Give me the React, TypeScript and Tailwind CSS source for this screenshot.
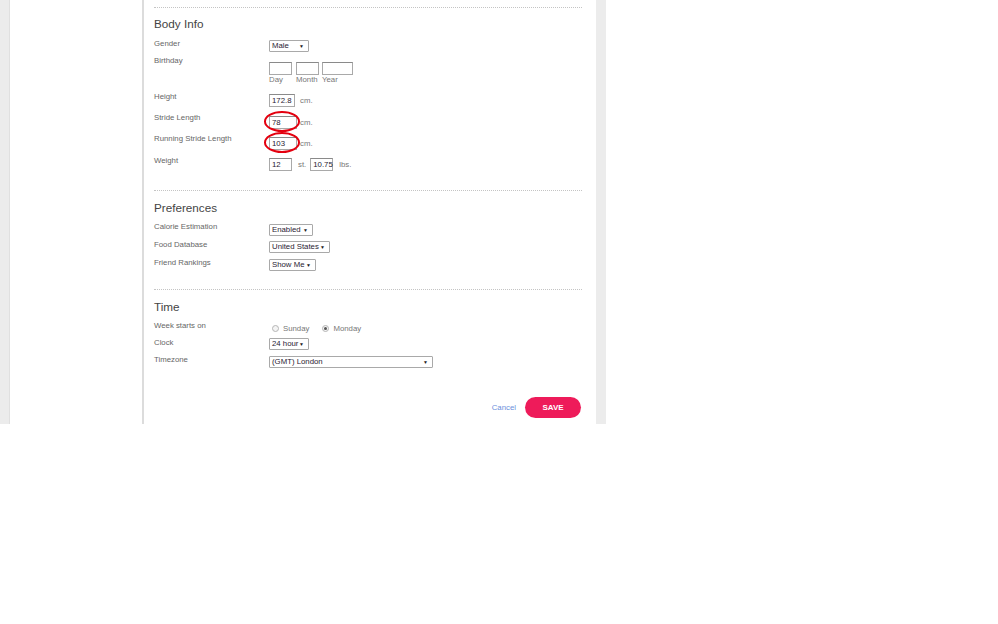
import React from "react";

const font = { fontFamily: '"Liberation Sans", Arial, sans-serif' };

function Select({ value, w }: { value: string; w: string }) {
  return (
    <div
      className={`${w} h-[12px] border border-[#a9a9a9] bg-white flex items-center justify-between pl-[2px] pr-[4px] text-[7.8px] leading-none text-[#2a2233] rounded-[1px]`}
    >
      <span>{value}</span>
      <span className="text-[5px] text-[#222]">▼</span>
    </div>
  );
}

function Input({ value = "", w }: { value?: string; w: string }) {
  return (
    <div
      className={`${w} h-[13px] border border-[#a9a9a9] border-t-[#8a8a8a] bg-white flex items-center pl-[2px] text-[7.8px] leading-none text-[#2a2233]`}
    >
      {value}
    </div>
  );
}

function Label({ children }: { children: React.ReactNode }) {
  return <div className="w-[115px] shrink-0 text-[7.8px] leading-[12px] text-[#666]">{children}</div>;
}

function Heading({ children, mt }: { children: React.ReactNode; mt: string }) {
  return <div className={`${mt} h-[14px] text-[11.7px] leading-[14px] text-[#444]`}>{children}</div>;
}

function Ring() {
  return (
    <div className="absolute left-[-5px] top-[-5px] w-[36px] h-[21px] rounded-[50%] border-2 border-[#e4000f] pointer-events-none" />
  );
}

function Radio({ checked }: { checked?: boolean }) {
  return (
    <span className="w-[7px] h-[7px] rounded-full border border-[#b5b5b5] bg-[#f4f4f4] flex items-center justify-center">
      {checked && <span className="w-[3px] h-[3px] rounded-full bg-[#555]" />}
    </span>
  );
}

const unit = "text-[7.8px] text-[#777]";

export default function App() {
  return (
    <div className="w-[998px] h-[624px] bg-white" style={font}>
      <div className="flex h-[424px] w-[606px]">
        <div className="w-[10px] bg-[#ececec] border-r border-[#e0e0e0]" />
        <div className="w-[132px] bg-white" />
        <div className="w-[2px] bg-[#dcdcdc]" />
        <div className="w-[452px] bg-white pl-[10px] pr-[14px] pt-[7px]">
          {/* Body Info */}
          <div className="border-t border-dotted border-[#c4c4c4]" />
          <Heading mt="mt-[9px]">Body Info</Heading>
          <div className="mt-[7px] h-[17px] flex items-start">
            <Label>Gender</Label>
            <div className="mt-[2px]">
              <Select value="Male" w="w-[40px]" />
            </div>
          </div>
          <div className="h-[36px] flex items-start">
            <Label>Birthday</Label>
            <div className="mt-[7px] flex gap-[4px]">
              <div>
                <Input w="w-[23px]" />
                <div className="text-[7.8px] leading-[10px] text-[#777]">Day</div>
              </div>
              <div>
                <Input w="w-[23px]" />
                <div className="text-[7.8px] leading-[10px] text-[#777]">Month</div>
              </div>
              <div className="-ml-[1px]">
                <Input w="w-[31px]" />
                <div className="text-[7.8px] leading-[10px] text-[#777]">Year</div>
              </div>
            </div>
          </div>
          <div className="h-[21px] flex items-start">
            <Label>Height</Label>
            <div className="mt-[3px] flex items-center gap-[5px]">
              <Input value="172.8" w="w-[26px]" />
              <span className={unit}>cm.</span>
            </div>
          </div>
          <div className="h-[21px] flex items-start">
            <Label>Stride Length</Label>
            <div className="mt-[4px] flex items-center gap-[3px]">
              <div className="relative">
                <Input value="78" w="w-[28px]" />
                <Ring />
              </div>
              <span className={unit}>cm.</span>
            </div>
          </div>
          <div className="h-[22px] flex items-start">
            <Label>Running Stride Length</Label>
            <div className="mt-[4px] flex items-center gap-[3px]">
              <div className="relative">
                <Input value="103" w="w-[28px]" />
                <Ring />
              </div>
              <span className={unit}>cm.</span>
            </div>
          </div>
          <div className="h-[35px] flex items-start">
            <Label>Weight</Label>
            <div className="mt-[3px] flex items-center">
              <Input value="12" w="w-[23px]" />
              <span className={`ml-[6px] mr-[4px] ${unit}`}>st.</span>
              <Input value="10.75" w="w-[23px]" />
              <span className={`ml-[6px] ${unit}`}>lbs.</span>
            </div>
          </div>

          {/* Preferences */}
          <div className="border-t border-dotted border-[#c4c4c4]" />
          <Heading mt="mt-[10px]">Preferences</Heading>
          <div className="mt-[6px] h-[18px] flex items-start">
            <Label>Calorie Estimation</Label>
            <div className="mt-[3px]">
              <Select value="Enabled" w="w-[44px]" />
            </div>
          </div>
          <div className="h-[18px] flex items-start">
            <Label>Food Database</Label>
            <div className="mt-[2px]">
              <Select value="United States" w="w-[61px]" />
            </div>
          </div>
          <div className="h-[32px] flex items-start">
            <Label>Friend Rankings</Label>
            <div className="mt-[2px]">
              <Select value="Show Me" w="w-[47px]" />
            </div>
          </div>

          {/* Time */}
          <div className="border-t border-dotted border-[#c4c4c4]" />
          <Heading mt="mt-[10px]">Time</Heading>
          <div className="mt-[6px] h-[17px] flex items-start">
            <Label>Week starts on</Label>
            <div className="mt-[3px] ml-[3px] flex items-center gap-[4px] text-[7.8px] text-[#777]">
              <Radio />
              <span className="mr-[9px]">Sunday</span>
              <Radio checked />
              <span>Monday</span>
            </div>
          </div>
          <div className="h-[17px] flex items-start">
            <Label>Clock</Label>
            <div className="mt-[1px]">
              <Select value="24 hour" w="w-[40px]" />
            </div>
          </div>
          <div className="h-[17px] flex items-start">
            <Label>Timezone</Label>
            <div className="mt-[2px]">
              <Select value="(GMT) London" w="w-[164px]" />
            </div>
          </div>

          <div className="mt-[26px] flex justify-end items-center gap-[9px] pr-[1px]">
            <span className="text-[7.8px] text-[#6b8fdc]">Cancel</span>
            <button className="w-[56px] h-[21px] rounded-full bg-[#ee1b5a] text-white text-[8px] font-bold">SAVE</button>
          </div>
        </div>
        <div className="w-[10px] bg-[#ececec]" />
      </div>
    </div>
  );
}
